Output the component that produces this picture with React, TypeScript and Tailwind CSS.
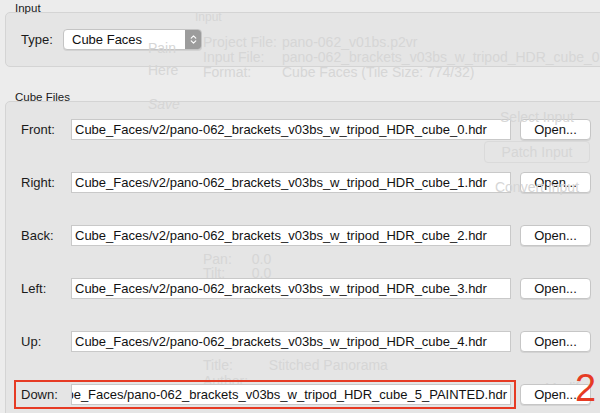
import { ChevronsUpDown } from 'lucide-react'

const faces = [
    { label: 'Front', file: 'Cube_Faces/v2/pano-062_brackets_v03bs_w_tripod_HDR_cube_0.hdr' },
    { label: 'Right', file: 'Cube_Faces/v2/pano-062_brackets_v03bs_w_tripod_HDR_cube_1.hdr' },
    { label: 'Back', file: 'Cube_Faces/v2/pano-062_brackets_v03bs_w_tripod_HDR_cube_2.hdr' },
    { label: 'Left', file: 'Cube_Faces/v2/pano-062_brackets_v03bs_w_tripod_HDR_cube_3.hdr' },
    { label: 'Up', file: 'Cube_Faces/v2/pano-062_brackets_v03bs_w_tripod_HDR_cube_4.hdr' },
]

function FaceRow({ label, file, scrolled }: { label: string; file: string; scrolled?: boolean }) {
    return (
        <div className="flex items-center h-[21px]">
            <span className="w-[65px] shrink-0 pl-[15px] text-[13px] text-[#1a1a1a]">{label}:</span>
            <div
                className={
                    'w-[440px] shrink-0 h-[21px] bg-white border border-[#c9c9c9] flex items-center overflow-hidden px-[3px] ' +
                    (scrolled ? 'justify-end' : '')
                }
            >
                <span className="whitespace-nowrap text-[13px] text-[#111]">{file}</span>
            </div>
            <button className="ml-[9px] w-[71px] shrink-0 h-[21px] bg-white border border-[#c6c6c6] rounded-[4px] shadow-[0_1px_0_rgba(0,0,0,0.08)] text-[13px] text-[#111]">
                Open...
            </button>
        </div>
    )
}

export default function App() {
    return (
        <div className="relative w-[600px] h-[413px] overflow-hidden bg-[#ececec] font-['Liberation_Sans',Arial,sans-serif]">
            {/* faded window behind */}
            <div className="absolute inset-0 pointer-events-none text-[#d6d6d6] text-[14px]">
                <div className="absolute left-[195px] top-[8px] text-[12px]">Input</div>
                <div className="absolute left-[203px] top-[35px] flex gap-[2px] leading-[15px] whitespace-nowrap">
                    <div className="w-[77px]">
                        <div>Project File:</div>
                        <div>Input File:</div>
                        <div>Format:</div>
                    </div>
                    <div>
                        <div>pano-062_v01bs.p2vr</div>
                        <div>pano-062_brackets_v03bs_w_tripod_HDR_cube_0.hdr</div>
                        <div>Cube Faces (Tile Size: 774/32)</div>
                    </div>
                </div>
                <div className="absolute left-[148px] top-[37px] leading-[22px]">
                    <div>Pain</div>
                    <div>Here</div>
                    <div className="mt-[12px] italic">Save</div>
                </div>
                <div className="absolute left-[484px] top-[106px] w-[106px] flex flex-col items-center gap-[13px] leading-[22px]">
                    <div>Select Input</div>
                    <div className="w-full h-[22px] border border-[#dadada] rounded-[4px] text-center leading-[20px]">Patch Input</div>
                    <div>Convert Input</div>
                </div>
                <div className="absolute left-[203px] top-[252px] flex gap-[20px] leading-[14px]">
                    <div>
                        <div>Pan:</div>
                        <div>Tilt:</div>
                    </div>
                    <div>
                        <div>0.0</div>
                        <div>0.0</div>
                    </div>
                </div>
                <div className="absolute left-[203px] top-[357px] leading-[16px]">
                    <div className="flex gap-[36px]">
                        <span>Title:</span>
                        <span>Stitched Panorama</span>
                    </div>
                    <div>Author:</div>
                </div>
                <div className="absolute left-[545px] top-[378px]">Modify</div>
            </div>

            {/* Input group */}
            <div className="h-[12px] pl-[15px] text-[11.5px] leading-[16px] text-[#1a1a1a]">Input</div>
            <div className="ml-[5px] w-[620px] h-[55px] rounded-[5px] border border-[#d4d4d4] bg-[#e3e3e3]/80 flex items-center pl-[15px]">
                <span className="w-[42px] text-[13px] text-[#1a1a1a]">Type:</span>
                <div className="w-[139px] h-[21px] flex rounded-[4px] border border-[#c4c4c4] bg-white overflow-hidden shadow-[0_1px_0_rgba(0,0,0,0.08)]">
                    <span className="flex-1 pl-[8px] text-[13px] leading-[19px] text-[#111]">Cube Faces</span>
                    <span className="w-[16px] bg-[#9c9c9c] flex items-center justify-center text-white">
                        <ChevronsUpDown size={11} strokeWidth={2.5} />
                    </span>
                </div>
            </div>

            {/* Cube files group */}
            <div className="mt-[22px] h-[12px] pl-[15px] text-[11.5px] leading-[16px] text-[#1a1a1a]">Cube Files</div>
            <div className="ml-[5px] w-[620px] h-[330px] rounded-[5px] border border-[#d4d4d4] bg-[#e3e3e3]/80 pt-[17px] flex flex-col gap-[32px]">
                {faces.map(f => (
                    <FaceRow key={f.label} label={f.label} file={f.file} />
                ))}
                <div className="relative">
                    <FaceRow label="Down" file="Cube_Faces/pano-062_brackets_v03bs_w_tripod_HDR_cube_5_PAINTED.hdr" scrolled />
                    <div className="absolute left-[8px] top-[-4px] w-[502px] h-[29px] border-2 border-[#e63b24] pointer-events-none" />
                </div>
            </div>

            <div className="absolute left-[575px] top-[368px] text-[38px] leading-[40px] text-[#e63b24]">2</div>
        </div>
    )
}
